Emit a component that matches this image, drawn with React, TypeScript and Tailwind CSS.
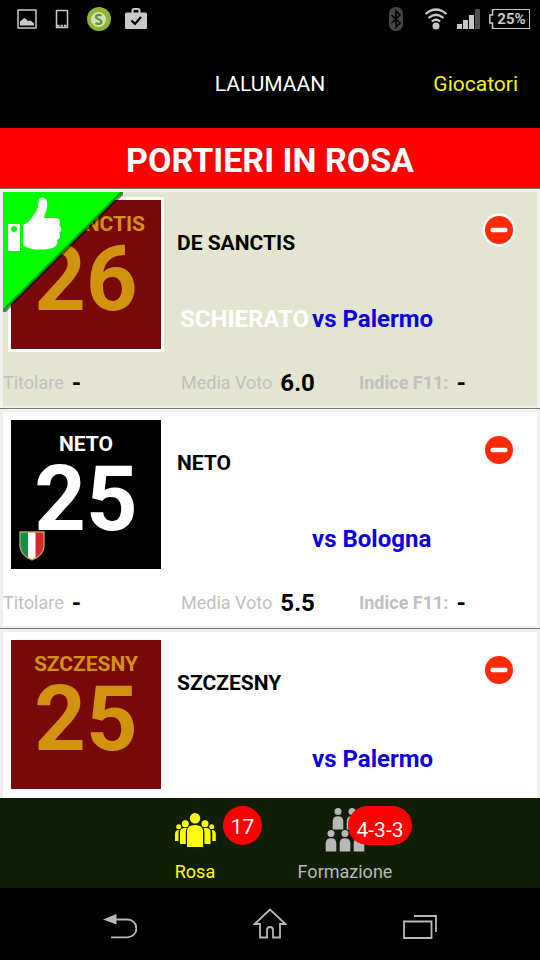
import { useState } from 'react'
import clsx from 'clsx'

type Player = {
  name: string
  jerseyName: string
  number: string
  kit: string
  opponent: string
  average?: string
  lineup?: boolean
  champion?: boolean
}

const initialPlayers: Player[] = [
  { name: 'DE SANCTIS', jerseyName: 'DE SANCTIS', number: '26', kit: 'bg-[#780809] text-[#d1930f]', opponent: 'Palermo', average: '6.0', lineup: true },
  { name: 'NETO', jerseyName: 'NETO', number: '25', kit: 'bg-black text-white', opponent: 'Bologna', average: '5.5', champion: true },
  { name: 'SZCZESNY', jerseyName: 'SZCZESNY', number: '25', kit: 'bg-[#780809] text-[#d1930f]', opponent: 'Palermo' },
]

function StatusBar() {
  return (
    <div className="flex h-[38px] shrink-0 items-center justify-between bg-black pr-2.5 pl-[17px] text-[#c8c8c8]">
      <div className="flex items-center gap-3.5">
        <svg width="20" height="20" viewBox="0 0 20 20" fill="none">
          <rect x="1" y="1" width="18" height="18" stroke="currentColor" strokeWidth="1.5" />
          <path d="M3 16.5v-4l2-1.5 2-2 2 1 2 2 2.5-.5 3.5 3v2z" fill="currentColor" />
        </svg>
        <svg width="22" height="20" viewBox="0 0 22 20" fill="none">
          <rect x="5.5" y="1.5" width="11" height="17" stroke="currentColor" strokeWidth="1.5" />
          <path d="M6 16.8h10" stroke="currentColor" strokeWidth="2" strokeDasharray="2.5 1" />
        </svg>
        <svg width="24" height="24" viewBox="0 0 24 24" fill="none">
          <circle cx="12" cy="12" r="12" fill="#8fb62c" />
          <circle cx="11.5" cy="12.5" r="7.5" fill="#d5dfc0" />
          <path d="M14.5 8.8c-2-1.500-5.500-1-5.500 1.300 0 2.600 5.500 1.700 5.500 4.600 0 2.400-3.700 2.900-6 1.300" stroke="#5f9136" strokeWidth="2.3" />
        </svg>
        <svg width="22" height="24" viewBox="0 0 22 24" fill="none">
          <path d="M7.5 6V3.500q0-1.500 1.500-1.500h4q1.500 0 1.500 1.500V6" stroke="currentColor" strokeWidth="2" />
          <rect y="5.5" width="22" height="16.5" rx="1.5" fill="currentColor" />
          <path d="m6.5 13.500 3.500 3.500 6-7" stroke="black" strokeWidth="2.2" />
        </svg>
      </div>
      <div className="flex items-center gap-[9px]">
        <svg className="mr-3" width="14" height="24" viewBox="0 0 14 24" fill="none">
          <rect width="14" height="24" rx="6.5" fill="#444" />
          <path d="m2.5 8 8.500 8-4 4V4l4 4-8.500 8" stroke="black" strokeWidth="1.7" />
        </svg>
        <svg width="24" height="22" viewBox="0 0 24 22" fill="none" stroke="currentColor" strokeWidth="2.2">
          <path d="M1.500 6q10.500-9 21 0M4.500 10q7.500-6.500 15 0M7.800 13.500q4.200-3.500 8.400 0" />
          <circle cx="12" cy="18" r="3.5" fill="currentColor" stroke="none" />
        </svg>
        <svg width="23" height="20" viewBox="0 0 23 20" fill="currentColor">
          <path d="M0 15h5v5H0zM6 11h5v9H6zM12 6h5v14h-5z" />
          <path d="M18 0h5v20h-5z" fill="#505050" />
        </svg>
        <div className="flex items-center">
          <svg width="5" height="20" viewBox="0 0 5 20" fill="none" stroke="currentColor" strokeWidth="1.5">
            <path d="M5 .8H3.500V6H.8v8h2.700v5.200H5" />
          </svg>
          <span className="flex h-5 w-9 items-center justify-center border border-l-0 border-[#c8c8c8] text-[15px] leading-5 font-bold">25%</span>
        </div>
      </div>
    </div>
  )
}

function LineupRibbon() {
  return (
    <svg className="absolute top-0 left-0" width="122" height="122" viewBox="0 0 122 122">
      <path d="M0 0h120L0 120z" fill="#00ff00" />
      <path d="M117 0h3v3L3 120H0v-3z" fill="#000" opacity=".35" />
      <path d="M120 0v3L3 120H0z" fill="#000" opacity=".2" />
      <g fill="#fff">
        <path d="M5 32h12v27H5zm6 2a3 3 0 1 0 0 6 3 3 0 0 0 0-6z" fillRule="evenodd" />
        <path d="M20 33c5-2 9-7 12-12 3-4 3-8 4-13 1-4 7-3 8 2 1 6-2 11-3 16h12c4 0 5 4 3 7 3 2 3 6 0 8 2 3 1 6-2 7 1 4-1 7-5 8-7 2-18 2-23 0-2-1-4-2-6-2z" />
      </g>
    </svg>
  )
}

function ChampionShield() {
  return (
    <svg className="absolute bottom-2 left-2" width="26" height="30" viewBox="0 0 26 30">
      <path d="M1 1h8.500v26C4 24 1 20 1 15z" fill="#0b9347" />
      <path d="M9 1h8v26l-4 2-4-2z" fill="#fff" />
      <path d="M16.500 1H25v14c0 5-3 9-8.500 12z" fill="#d62730" />
      <path d="M1 1h24v14c0 7-5 11-12 14C6 26 1 22 1 15z" fill="none" stroke="#c9a24a" strokeWidth="1.3" />
    </svg>
  )
}

function Jersey({ player }: { player: Player }) {
  return (
    <div className="h-[155px] w-[156px] border-3 border-white">
      <div className={clsx('relative flex h-full flex-col items-center pt-3 font-bold', player.kit)}>
        <span className="text-[21px] leading-6">{player.jerseyName}</span>
        <span className="text-[90px] leading-[88px]">{player.number}</span>
        {player.champion && <ChampionShield />}
      </div>
    </div>
  )
}

function Stat({ label, value, strong }: { label: string; value: string; strong?: boolean }) {
  return (
    <div className="flex items-center gap-2 whitespace-nowrap">
      <dt className={clsx('text-lg leading-7 text-[#c0c0c0]', strong && 'font-bold')}>{label}</dt>
      <dd className="text-2xl leading-7 font-bold text-black">{value}</dd>
    </div>
  )
}

function PlayerRow({ player, onRemove }: { player: Player; onRemove: () => void }) {
  return (
    <li className="border-t border-[#777]">
      <div className={clsx('relative min-h-[219px] border-3 border-b-2 border-[#f0f0ee]', player.lineup ? 'bg-[#e3e5d0]' : 'bg-white')}>
        <div className="flex pt-[5px] pl-[5px]">
          <Jersey player={player} />
          <div className="flex flex-1 flex-col pl-[13px]">
            <div className="flex items-start justify-between pt-4 pr-[21px]">
              <h2 className="pt-4 text-[21px] leading-7 font-bold text-black">{player.name}</h2>
              <button type="button" aria-label={`Rimuovi ${player.name}`} onClick={onRemove}>
                <svg width="34" height="34" viewBox="0 0 34 34">
                  <circle cx="17" cy="17" r="16.5" fill="#fff" />
                  <circle cx="17" cy="17" r="14" fill="#ff2a05" />
                  <rect x="8.5" y="14.8" width="17" height="4.4" rx="2" fill="#fff" />
                </svg>
              </button>
            </div>
            <div className="flex pt-12 text-2xl leading-7 font-bold">
              <span className="w-[135px] pl-[3px] text-white">{player.lineup && 'SCHIERATO'}</span>
              <span className="text-[#0a00e0]">vs {player.opponent}</span>
            </div>
          </div>
        </div>
        {player.average && (
          <dl className="grid grid-cols-3 pt-[17px] pb-[9px]">
            <Stat label="Titolare" value="-" />
            <Stat label="Media Voto" value={player.average} />
            <Stat label="Indice F11:" value="-" strong />
          </dl>
        )}
        {player.lineup && <LineupRibbon />}
      </div>
    </li>
  )
}

function SquadIcon() {
  return (
    <svg width="41" height="35" viewBox="0 0 41 35" fill="currentColor">
      <circle cx="20" cy="5.3" r="5.2" />
      <path d="M12 34V18q0-6 8-6t8 6v16z" />
      <circle cx="10.3" cy="10.7" r="3.5" />
      <circle cx="30" cy="10.7" r="3.5" />
      <path d="M5 31V19q0-4 5-4l2 .3q-1.200 1.700-1.200 4V31zM35.500 31V19q0-4-5-4l-2 .3q1 1.700 1 4V31z" />
      <circle cx="3.7" cy="13.7" r="2.5" />
      <circle cx="36.7" cy="13.7" r="2.5" />
      <path d="M0 28v-7q0-4 4-4-.5 1-.5 3v8zM40.800 28v-7q0-4-4-4 .5 1 .5 3v8z" />
    </svg>
  )
}

const formationSpots = [[13, 3.5], [27, 3.5], [6, 25.5], [20, 25.5], [34, 25.5]]

function FormationIcon() {
  return (
    <svg width="41" height="44" viewBox="0 0 41 44" fill="currentColor">
      {formationSpots.map(([x, y]) => (
        <g key={`${x}-${y}`} transform={`translate(${x} ${y})`}>
          <circle r="3.5" />
          <path d="M-5.300 18v-8q0-5.200 5.300-5.200T5.300 10v8z" />
        </g>
      ))}
    </svg>
  )
}

export default function App() {
  const [players, setPlayers] = useState(initialPlayers)
  const [tab, setTab] = useState('rosa')

  return (
    <div className="flex h-screen flex-col overflow-hidden bg-black font-['Roboto',sans-serif]">
      <StatusBar />
      <header className="grid h-[90px] shrink-0 grid-cols-[1fr_auto_1fr] items-center px-[22px] pt-0.5 text-[21px] leading-7">
        <h1 className="col-start-2 text-white">LALUMAAN</h1>
        <a href="#giocatori" className="justify-self-end text-[#f5f500]">Giocatori</a>
      </header>
      <main className="flex min-h-0 flex-1 flex-col bg-white">
        <h2 className="bg-[#ff0000] pt-3 pb-2 text-center text-[34px] leading-10 font-bold text-white">PORTIERI IN ROSA</h2>
        <ul className="min-h-0 flex-1 overflow-y-auto [scrollbar-width:none]">
          {players.map((p) => (
            <PlayerRow key={p.name} player={p} onRemove={() => setPlayers(players.filter((x) => x !== p))} />
          ))}
        </ul>
      </main>
      <nav className="flex h-[90px] shrink-0 justify-center bg-[#0f1e04] text-lg leading-6">
        <button
          type="button"
          onClick={() => setTab('rosa')}
          className={clsx('relative flex w-[150px] flex-col items-center gap-2 pt-2.5', tab === 'rosa' ? 'text-[#ffff00]' : 'text-[#b8b8b8]')}
        >
          <span className="flex h-11 items-center"><SquadIcon /></span>
          Rosa
          <span className="absolute top-2 left-[103px] flex h-[39px] w-[39px] items-center justify-center rounded-full bg-[#ff0000] pt-0.5 text-[21px] text-white">17</span>
        </button>
        <button
          type="button"
          onClick={() => setTab('formazione')}
          className={clsx('relative flex w-[150px] flex-col items-center gap-2 pt-2.5', tab === 'formazione' ? 'text-[#ffff00]' : 'text-[#b8b8b8]')}
        >
          <span className="flex h-11 items-center"><FormationIcon /></span>
          Formazione
          <span className="absolute top-2 left-[78px] flex h-[39px] w-16 items-center justify-center rounded-full bg-[#ff0000] pt-2 text-[21px] text-white">4-3-3</span>
        </button>
      </nav>
      <div className="flex h-[72px] shrink-0 items-center justify-center bg-black pt-0.5 text-[#b8b8b8]">
        <button type="button" aria-label="Indietro" className="flex w-[150px] justify-center">
          <svg width="34" height="34" viewBox="0 0 34 34" fill="none">
            <path d="M12 11.500h12.500a8.800 8.800 0 0 1 0 17.800H8" stroke="currentColor" strokeWidth="1.8" />
            <path d="M0 11.500 13.500 6v10.500z" fill="currentColor" />
          </svg>
        </button>
        <button type="button" aria-label="Home" className="flex w-[150px] justify-center">
          <svg width="34" height="34" viewBox="0 0 34 34" fill="none" stroke="currentColor" strokeWidth="1.8">
            <path d="M17 1.500 1.500 16H7v13.500h7V22q0-3 3-3t3 3v7.500h7V16h5.500z" />
          </svg>
        </button>
        <button type="button" aria-label="App recenti" className="flex w-[150px] justify-center">
          <svg width="34" height="34" viewBox="0 0 34 34" fill="none" stroke="currentColor" strokeWidth="1.8">
            <path d="M1 13.500h27.500V30H1zM11 8h22v16" />
          </svg>
        </button>
      </div>
    </div>
  )
}
